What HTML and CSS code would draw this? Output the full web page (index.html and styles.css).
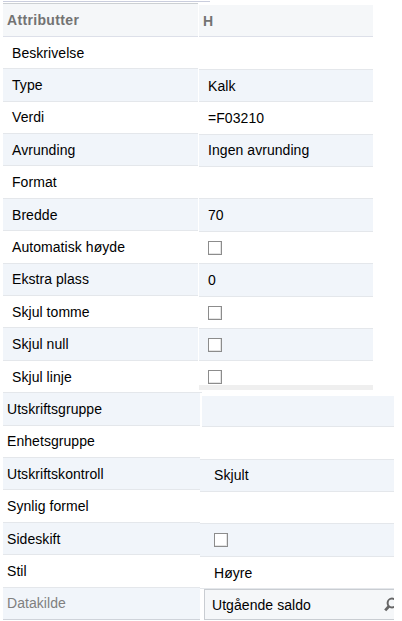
FILE: index.html
```html
<!DOCTYPE html>
<html lang="no">
<head>
<meta charset="utf-8">
<title>Attributter</title>
<link rel="stylesheet" href="styles.css">
</head>
<body>
<div class="rule"></div>
<main class="panel">
  <section class="labels">
    <div class="row head">Attributter</div>
    <div class="row">Beskrivelse</div>
    <div class="row tall alt">Type</div>
    <div class="row high">Verdi</div>
    <div class="row alt">Avrunding</div>
    <div class="row tall">Format</div>
    <div class="row alt">Bredde</div>
    <div class="row tall">Automatisk høyde</div>
    <div class="row alt high">Ekstra plass</div>
    <div class="row">Skjul tomme</div>
    <div class="row tall alt">Skjul null</div>
    <div class="row wide">Skjul linje</div>
    <div class="row tall alt outer">Utskriftsgruppe</div>
    <div class="row outer high">Enhetsgruppe</div>
    <div class="row alt outer">Utskriftskontroll</div>
    <div class="row tall outer">Synlig formel</div>
    <div class="row alt outer">Sideskift</div>
    <div class="row tall outer">Stil</div>
    <div class="row alt outer muted high">Datakilde</div>
  </section>
  <section class="values">
    <div class="upper">
      <div class="row head">H</div>
      <div class="row tall"></div>
      <div class="row alt low">Kalk</div>
      <div class="row tall low">=F03210</div>
      <div class="row alt">Ingen avrunding</div>
      <div class="row"></div>
      <div class="row tall alt low">70</div>
      <div class="row"><span class="check"></span></div>
      <div class="row tall alt low">0</div>
      <div class="row"><span class="check"></span></div>
      <div class="row alt"><span class="check"></span></div>
      <div class="row last"><span class="check"></span></div>
    </div>
    <div class="lower">
      <div class="row first alt"></div>
      <div class="row tall"></div>
      <div class="row alt">Skjult</div>
      <div class="row"></div>
      <div class="row tall alt"><span class="check"></span></div>
      <div class="row low">Høyre</div>
      <div class="field"><span>Utgående saldo</span>
        <svg class="search" width="10" height="16" viewBox="0 0 10 16"><circle cx="8" cy="6" r="4.4" fill="none" stroke="#666" stroke-width="2"/><path d="M5 9.2 1.2 13.4" stroke="#666" stroke-width="2.8"/></svg>
      </div>
    </div>
  </section>
</main>
</body>
</html>
```
FILE: styles.css
```css
* { box-sizing: border-box; }
body {
  margin: 0;
  padding: 1px 0 0 3px;
  height: 621px;
  overflow: hidden;
  background: #fff;
  color: #000;
  font: 14px/31px "Liberation Sans", Arial, sans-serif;
  letter-spacing: 0.06px;
}
.rule { width: 207px; height: 1px; background: #c9cddd; }
.panel { display: flex; padding-top: 1px; }
.labels { width: 195px; margin-right: 1px; line-height: 33px; }
.row {
  display: flex;
  height: 32px;
  padding-left: 9px;
  border-bottom: 1px solid #e4e7eb;
  white-space: nowrap;
}
.tall { height: 33px; }
.low { line-height: 33px; }
.high { line-height: 31px; }
.alt { background: #f1f5fa; }
.head {
  height: 34px;
  padding-left: 4px;
  background: #f5f7f9;
  border-bottom-color: #dde0e9;
  color: #737373;
  font-weight: bold;
  letter-spacing: 0.34px;
}
.labels .head { border-top: 1px solid #ccd0d3; }
.outer { width: 197px; padding-left: 4px; }
.wide { width: 199px; }
.muted { color: #808080; border-bottom-color: #cfd3da; }
.values { width: 195px; padding-top: 2px; }
.upper { width: 174px; }
.upper .head { height: 32px; line-height: 33px; }
.upper .last { height: 29px; border-bottom: 5px solid #efefef; }
.check {
  display: block;
  width: 14px;
  height: 14px;
  margin-top: 9px;
  border: 1px solid #8c8c8c;
  background: #fff;
  box-shadow: inset -1px -1px #e4e4e4;
}
.lower { margin: 6px 0 0 1px; width: 194px; }
.lower .row { padding-left: 14px; }
.lower .first { height: 31px; margin-left: 2px; }
.field {
  display: flex;
  justify-content: space-between;
  height: 31px;
  margin-left: 4px;
  padding-left: 7px;
  border: 1px solid #c9cdd2;
  border-right: 0;
  background: #f5f7f9;
}
.search { margin-top: 7px; }
```
